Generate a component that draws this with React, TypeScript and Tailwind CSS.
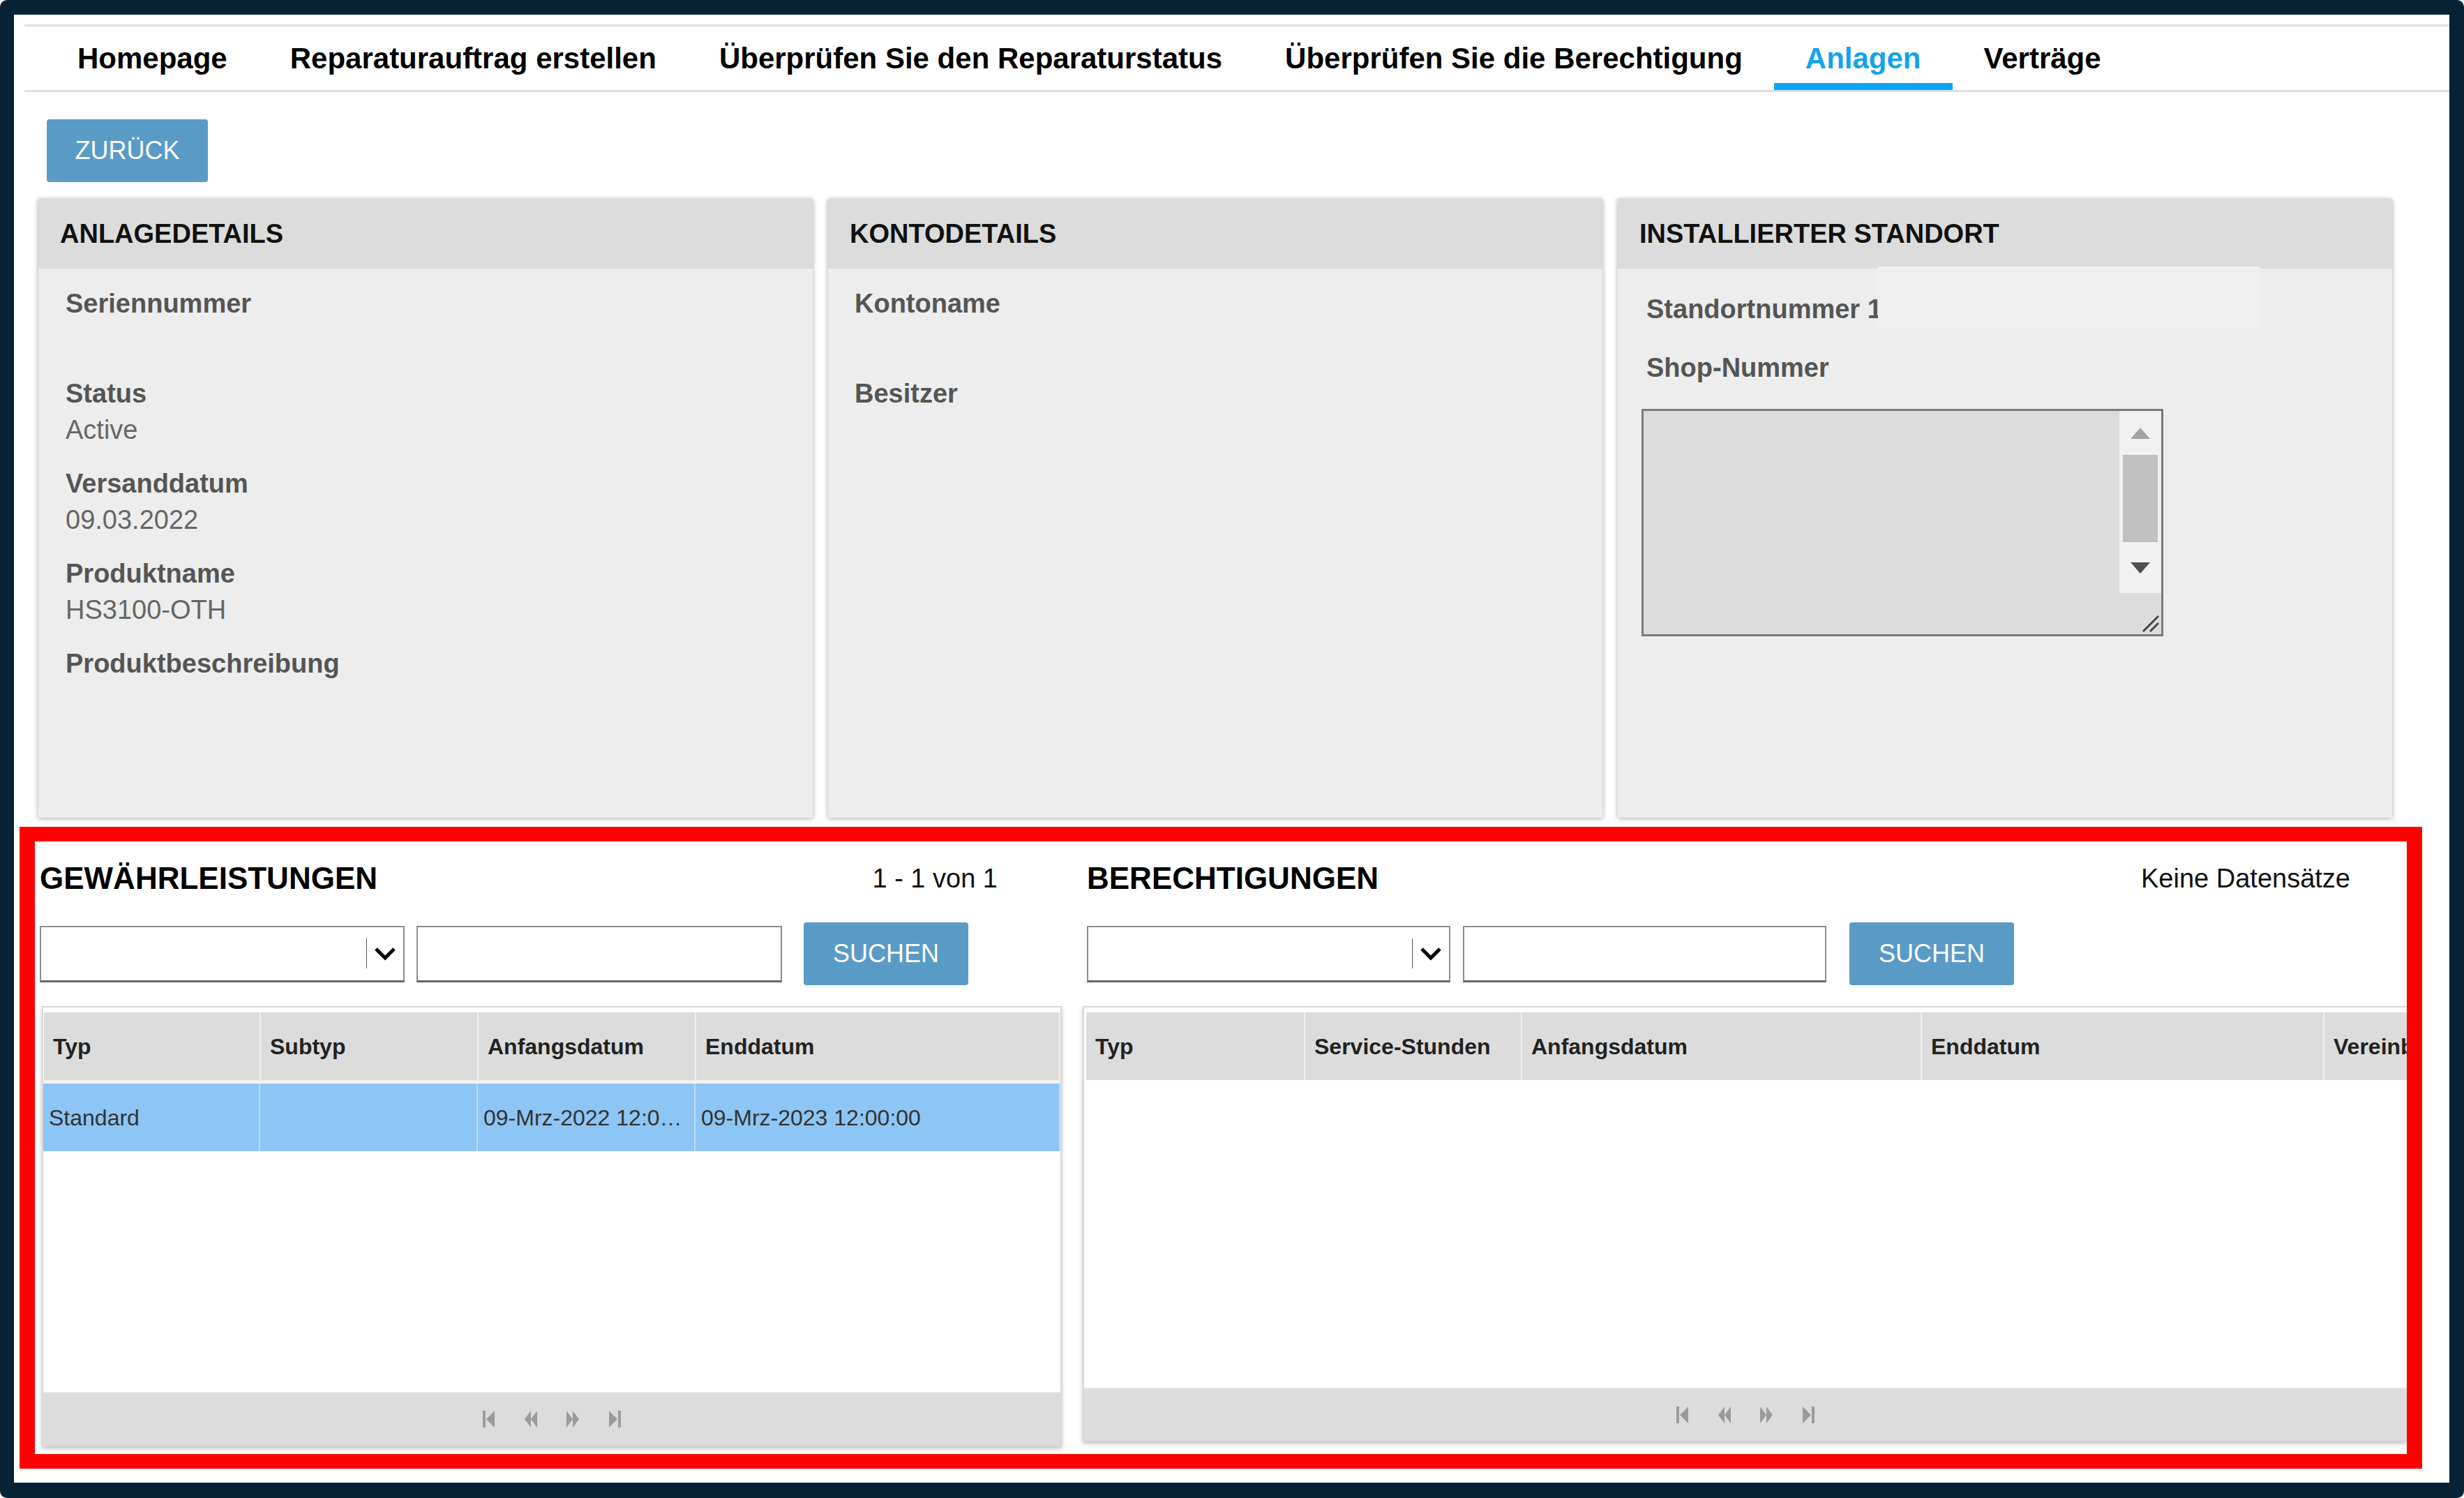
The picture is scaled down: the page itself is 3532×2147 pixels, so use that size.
import type { ReactNode } from "react";

const tabs = [
  "Homepage",
  "Reparaturauftrag erstellen",
  "Überprüfen Sie den Reparaturstatus",
  "Überprüfen Sie die Berechtigung",
  "Anlagen",
  "Verträge",
];

const NavTab = ({ label, active }: { label: string; active?: boolean }) => (
  <li
    className={
      active
        ? "h-[91px] px-[45px] pt-[10px] flex items-center border-b-[10px] border-[#0aa5f1] text-[#14a3ee]"
        : "h-[91px] px-[45px] pt-[10px] flex items-center border-b-[10px] border-transparent text-black"
    }
  >
    {label}
  </li>
);

const Card = ({ title, children }: { title: string; children: ReactNode }) => (
  <section className="relative w-[1110px] h-[887px] flex flex-col bg-[#ededed] shadow-[0_1px_7px_rgba(0,0,0,0.35)]">
    <header className="h-[100px] shrink-0 pl-[31px] flex items-center bg-[#dcdcdc] text-[38px] font-bold text-[#111]">
      {title}
    </header>
    {children}
  </section>
);

const Field = ({ label, value }: { label: string; value?: string }) => (
  <div className="mb-[25px]">
    <div className="leading-[52px] text-[38px] font-bold text-[#555]">{label}</div>
    <div className="h-[52px] leading-[52px] text-[38px] text-[#666]">{value}</div>
  </div>
);

const Chevron = () => (
  <svg width="32" height="22" viewBox="0 0 32 22">
    <polyline points="3,4 16,17 29,4" fill="none" stroke="#000" strokeWidth="5" />
  </svg>
);

const FilterBar = ({ selectW, inputW, gapA, gapB }: { selectW: string; inputW: string; gapA: string; gapB: string }) => (
  <div className="mt-[37px] h-[90px] flex items-center">
    <div className={`${selectW} h-[81px] flex items-center justify-end bg-white border-2 border-[#8c8c8c] border-b-[3px] border-b-[#666]`}>
      <div className="w-[1px] h-[43px] bg-[#555]" />
      <div className="w-[52px] flex justify-center">
        <Chevron />
      </div>
    </div>
    <div className={`${gapA} ${inputW} h-[81px] bg-white border-2 border-[#8c8c8c] border-b-[3px] border-b-[#666]`} />
    <button className={`${gapB} w-[236px] h-[90px] rounded-[4px] bg-[#5a9bc6] text-white text-[36px]`}>
      SUCHEN
    </button>
  </div>
);

const PagerIcon = ({ kind }: { kind: "first" | "prev" | "next" | "last" }) => (
  <svg width="20" height="24" viewBox="0 0 20 24" className="fill-[#9b9b9b]">
    {kind === "first" && (
      <>
        <rect x="1" y="0" width="4" height="24" />
        <polygon points="18,0 6,12 18,24" />
      </>
    )}
    {kind === "prev" && (
      <>
        <polygon points="10,0 1,12 10,24" />
        <polygon points="19,0 10,12 19,24" />
      </>
    )}
    {kind === "next" && (
      <>
        <polygon points="1,0 10,12 1,24" />
        <polygon points="10,0 19,12 10,24" />
      </>
    )}
    {kind === "last" && (
      <>
        <polygon points="2,0 14,12 2,24" />
        <rect x="15" y="0" width="4" height="24" />
      </>
    )}
  </svg>
);

const Pager = ({ h }: { h: string }) => (
  <footer className={`${h} shrink-0 flex items-center justify-center gap-[40px] bg-[#dcdcdc] border-t-2 border-[#e6e6e6]`}>
    <PagerIcon kind="first" />
    <PagerIcon kind="prev" />
    <PagerIcon kind="next" />
    <PagerIcon kind="last" />
  </footer>
);

const HeadCell = ({ w, children }: { w: string; children: ReactNode }) => (
  <div className={`${w} shrink-0 h-full pl-[13px] flex items-center border-r-2 border-[#f0f0f0] whitespace-nowrap overflow-hidden`}>
    {children}
  </div>
);

const RowCell = ({ w, children }: { w: string; children?: ReactNode }) => (
  <div className={`${w} shrink-0 h-full pl-[8px] pr-[4px] flex items-center border-r-2 border-[#bcdcf7] min-w-0`}>
    <span className="truncate">{children}</span>
  </div>
);

export default function App() {
  return (
    <div
      className="w-[3532px] h-[2147px] bg-[#062234] rounded-[10px] pt-[21px] pl-[20px] pr-[21px] pb-[22px]"
      style={{ fontFamily: '"Liberation Sans", Arial, sans-serif' }}
    >
      <div className="w-full h-full bg-white flex flex-col overflow-hidden">
        {/* tabs */}
        <nav className="mt-[14px] ml-[15px] border-y-[3px] border-[#dddddd]">
          <ul className="flex pl-[31px] text-[42px] font-bold">
            {tabs.map((t) => (
              <NavTab key={t} label={t} active={t === "Anlagen"} />
            ))}
          </ul>
        </nav>

        <button className="mt-[39px] ml-[47px] w-[231px] h-[90px] rounded-[4px] bg-[#5a9bc6] text-white text-[36px]">
          ZURÜCK
        </button>

        {/* detail cards */}
        <div className="mt-[24px] ml-[35px] flex gap-[22px]">
          <Card title="ANLAGEDETAILS">
            <div className="pt-[24px] pl-[39px]">
              <Field label="Seriennummer" />
              <Field label="Status" value="Active" />
              <Field label="Versanddatum" value="09.03.2022" />
              <Field label="Produktname" value="HS3100-OTH" />
              <div className="leading-[52px] text-[38px] font-bold text-[#555]">Produktbeschreibung</div>
            </div>
          </Card>
          <Card title="KONTODETAILS">
            <div className="pt-[24px] pl-[38px]">
              <Field label="Kontoname" />
              <Field label="Besitzer" />
            </div>
          </Card>
          <Card title="INSTALLIERTER STANDORT">
            <div className="pt-[32px] pl-[34px]">
              <div className="pl-[7px] leading-[52px] text-[38px] font-bold text-[#555]">Standortnummer 1</div>
              <div className="mt-[32px] pl-[7px] leading-[52px] text-[38px] font-bold text-[#555]">Shop-Nummer</div>
              <div className="mt-[33px] w-[748px] h-[326px] flex border-[3px] border-[#7a7a7a] bg-[#dcdcdc]">
                <div className="flex-1" />
                <div className="w-[60px] flex flex-col">
                  <div className="h-[261px] flex flex-col bg-[#f1f1f1]">
                    <div className="h-[63px] flex items-center justify-center">
                      <svg width="28" height="16" viewBox="0 0 28 16">
                        <polygon points="0,16 14,0 28,16" fill="#a3a3a3" />
                      </svg>
                    </div>
                    <div className="h-[125px] mx-[5px] bg-[#c1c1c1]" />
                    <div className="flex-1 flex items-center justify-center">
                      <svg width="28" height="16" viewBox="0 0 28 16">
                        <polygon points="0,0 28,0 14,16" fill="#505050" />
                      </svg>
                    </div>
                  </div>
                  <div className="flex-1 flex items-end justify-end p-[3px]">
                    <svg width="28" height="28" viewBox="0 0 28 28">
                      <line x1="27" y1="5" x2="5" y2="27" stroke="#444" strokeWidth="3" />
                      <line x1="27" y1="15" x2="15" y2="27" stroke="#444" strokeWidth="3" />
                    </svg>
                  </div>
                </div>
              </div>
            </div>
            <div className="absolute left-[373px] top-[97px] w-[547px] h-[90px] bg-[#efefef]" />
          </Card>
        </div>

        {/* highlighted grids */}
        <div className="mt-[13px] ml-[8px] w-[3444px] h-[920px] border-x-[22px] border-y-[21px] border-[#ff0000] flex overflow-hidden">
          <div className="w-[1472px] shrink-0 pl-[7px] flex flex-col">
            <div className="mt-[27px] h-[52px] pr-[92px] flex items-center justify-between">
              <h2 className="text-[44px] font-bold text-black">GEWÄHRLEISTUNGEN</h2>
              <span className="text-[38px] text-[#111]">1 - 1 von 1</span>
            </div>
            <FilterBar selectW="w-[523px]" inputW="w-[524px]" gapA="ml-[17px]" gapB="ml-[31px]" />
            <div className="mt-[30px] ml-[3px] h-[631px] flex flex-col bg-white border-2 border-[#d8d8d8] shadow-[0_3px_6px_rgba(0,0,0,0.25)]">
              <div className="mt-[7px] ml-[1px] h-[97px] shrink-0 flex bg-[#dcdcdc] text-[32px] font-bold text-[#222]">
                <HeadCell w="w-[311px]">Typ</HeadCell>
                <HeadCell w="w-[312px]">Subtyp</HeadCell>
                <HeadCell w="w-[312px]">Anfangsdatum</HeadCell>
                <HeadCell w="flex-1">Enddatum</HeadCell>
              </div>
              <div className="h-[5px] shrink-0 bg-[#f3f3f3]" />
              <div className="h-[97px] shrink-0 flex bg-[#8dc5f4] text-[32px] text-[#333]">
                <RowCell w="w-[311px]">Standard</RowCell>
                <RowCell w="w-[312px]" />
                <RowCell w="w-[312px]">09-Mrz-2022 12:00:00</RowCell>
                <RowCell w="flex-1">09-Mrz-2023 12:00:00</RowCell>
              </div>
              <div className="flex-1" />
              <Pager h="h-[76px]" />
            </div>
          </div>

          <div className="ml-[30px] flex-1 min-w-0 flex flex-col">
            <div className="mt-[27px] h-[52px] pl-[6px] pr-[81px] flex items-center justify-between">
              <h2 className="text-[44px] font-bold text-black">BERECHTIGUNGEN</h2>
              <span className="text-[38px] text-[#111]">Keine Datensätze</span>
            </div>
            <div className="pl-[6px]">
              <FilterBar selectW="w-[521px]" inputW="w-[521px]" gapA="ml-[18px]" gapB="ml-[33px]" />
            </div>
            <div className="mt-[30px] h-[624px] flex flex-col bg-white border-2 border-r-0 border-[#d8d8d8] shadow-[0_3px_6px_rgba(0,0,0,0.25)] overflow-hidden">
              <div className="mt-[7px] ml-[3px] h-[97px] shrink-0 flex bg-[#dcdcdc] text-[32px] font-bold text-[#222]">
                <HeadCell w="w-[314px]">Typ</HeadCell>
                <HeadCell w="w-[311px]">Service-Stunden</HeadCell>
                <HeadCell w="w-[573px]">Anfangsdatum</HeadCell>
                <HeadCell w="w-[577px]">Enddatum</HeadCell>
                <HeadCell w="w-[420px]">Vereinbarung</HeadCell>
              </div>
              <div className="flex-1" />
              <Pager h="h-[75px]" />
            </div>
          </div>
        </div>
      </div>
    </div>
  );
}
